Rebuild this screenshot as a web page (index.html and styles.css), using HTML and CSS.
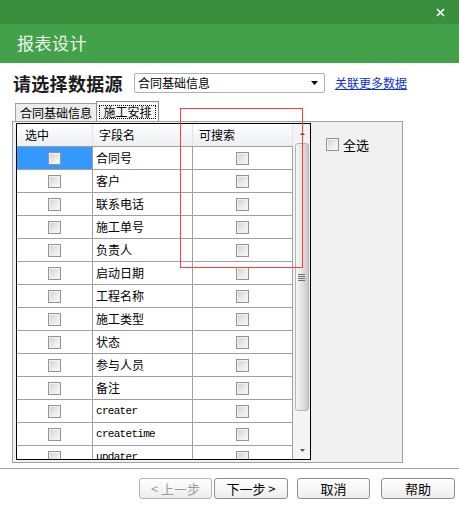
FILE: index.html
```html
<!DOCTYPE html>
<html lang="zh-CN">
<head>
<meta charset="utf-8">
<title>报表设计</title>
<link rel="stylesheet" href="styles.css">
</head>
<body>
<div class="dialog">
  <div class="topbar">
    <svg class="close" width="9" height="9" viewBox="0 0 9 9"><path d="M1 1L8 8M8 1L1 8" stroke="#fff" stroke-width="1.7"/></svg>
  </div>
  <div class="titlebar">报表设计</div>

  <div class="source-row">
    <span class="source-label">请选择数据源</span>
    <div class="select">
      <span>合同基础信息</span>
      <svg class="select-arrow" width="7" height="4" viewBox="0 0 7 4"><path d="M0 0H7L3.5 4Z" fill="#000"/></svg>
    </div>
    <a class="link" href="#">关联更多数据</a>
  </div>

  <div class="tabs">
    <div class="tab">合同基础信息</div>
    <div class="tab tab-active"><span class="focus">施工安排</span></div>
  </div>

  <div class="panel">
    <div class="grid">
      <div class="table">
        <div class="row head"><div class="c1">选中</div><div class="c2">字段名</div><div class="c3">可搜索</div></div>
        <div class="row"><div class="c1 sel"><span class="cb"></span></div><div class="c2">合同号</div><div class="c3"><span class="cb"></span></div></div>
        <div class="row"><div class="c1"><span class="cb"></span></div><div class="c2">客户</div><div class="c3"><span class="cb"></span></div></div>
        <div class="row"><div class="c1"><span class="cb"></span></div><div class="c2">联系电话</div><div class="c3"><span class="cb"></span></div></div>
        <div class="row"><div class="c1"><span class="cb"></span></div><div class="c2">施工单号</div><div class="c3"><span class="cb"></span></div></div>
        <div class="row"><div class="c1"><span class="cb"></span></div><div class="c2">负责人</div><div class="c3"><span class="cb"></span></div></div>
        <div class="row"><div class="c1"><span class="cb"></span></div><div class="c2">启动日期</div><div class="c3"><span class="cb"></span></div></div>
        <div class="row"><div class="c1"><span class="cb"></span></div><div class="c2">工程名称</div><div class="c3"><span class="cb"></span></div></div>
        <div class="row"><div class="c1"><span class="cb"></span></div><div class="c2">施工类型</div><div class="c3"><span class="cb"></span></div></div>
        <div class="row"><div class="c1"><span class="cb"></span></div><div class="c2">状态</div><div class="c3"><span class="cb"></span></div></div>
        <div class="row"><div class="c1"><span class="cb"></span></div><div class="c2">参与人员</div><div class="c3"><span class="cb"></span></div></div>
        <div class="row"><div class="c1"><span class="cb"></span></div><div class="c2">备注</div><div class="c3"><span class="cb"></span></div></div>
        <div class="row"><div class="c1"><span class="cb"></span></div><div class="c2 mono">creater</div><div class="c3"><span class="cb"></span></div></div>
        <div class="row"><div class="c1"><span class="cb"></span></div><div class="c2 mono">createtime</div><div class="c3"><span class="cb"></span></div></div>
        <div class="row"><div class="c1"><span class="cb"></span></div><div class="c2 mono">updater</div><div class="c3"><span class="cb"></span></div></div>
      </div>
      <div class="scrollbar">
        <div class="sb-btn"><svg width="5" height="3" viewBox="0 0 5 3"><path d="M0 3H5L2.5 0Z" fill="#555"/></svg></div>
        <div class="sb-track">
          <div class="sb-thumb"><span class="grip"></span></div>
        </div>
        <div class="sb-btn"><svg width="5" height="3" viewBox="0 0 5 3"><path d="M0 0H5L2.5 3Z" fill="#555"/></svg></div>
      </div>
    </div>
    <div class="side">
      <label class="selectall"><span class="cb"></span><span>全选</span></label>
    </div>
  </div>

  <div class="footer">
    <button class="btn btn-disabled">&lt; 上一步</button>
    <button class="btn btn-next">下一步 &gt;</button>
    <button class="btn btn-cancel">取消</button>
    <button class="btn btn-help">帮助</button>
  </div>

  <div class="redbox"></div>
</div>
</body>
</html>
```

FILE: styles.css
```css
* { box-sizing: border-box; }
html, body { margin: 0; padding: 0; background: #fff; }
body {
  font-family: "Noto Sans CJK SC", "Noto Sans", sans-serif;
  font-size: 12px;
  color: #000;
}
.dialog {
  position: relative;
  width: 459px;
  height: 507px;
  overflow: hidden;
  background: #fff;
}
.topbar {
  height: 24px;
  background: #3a8f3f;
  display: flex;
  justify-content: flex-end;
  align-items: center;
  padding-right: 14px;
}
.close { display: block; }
.titlebar {
  height: 39px;
  background: #43a149;
  color: #eef7ee;
  font-size: 17px;
  line-height: 38px;
  padding-left: 17px;
  letter-spacing: 0.5px;
}
.source-row {
  margin-top: 10px;
  height: 20px;
  padding-left: 13px;
  display: flex;
  align-items: center;
}
.source-label {
  width: 121px;
  font-size: 18px;
  font-weight: bold;
  line-height: 20px;
  color: #1c1c1c;
  letter-spacing: 0.3px;
}
.select {
  width: 191px;
  height: 20px;
  border: 1px solid #aab0b8;
  border-radius: 2px;
  background: #fff;
  padding-left: 3px;
  padding-right: 6px;
  display: flex;
  align-items: center;
  justify-content: space-between;
  font-size: 12px;
  line-height: 18px;
}
.select-arrow { display: block; }
.link {
  margin-left: 10px;
  font-size: 12px;
  line-height: 16px;
  color: #0a2fe0;
  text-decoration: underline;
}
.tabs {
  margin-top: 8px;
  height: 20px;
  padding-left: 15px;
  display: flex;
  align-items: flex-end;
}
.tab {
  height: 18px;
  width: 82px;
  border: 1px solid #a0a0a0;
  border-bottom: none;
  background: #ececec;
  font-size: 12px;
  line-height: 17px;
  text-align: center;
}
.tab-active {
  height: 20px;
  width: 63px;
  margin-left: -1px;
  background: #f9f9f9;
  border-color: #8c8c8c;
  padding: 3px 2px 2px 2px;
  display: flex;
}
.focus {
  flex: 1;
  border: 1px dotted #000;
  line-height: 12px;
  font-size: 12px;
  text-align: center;
}
.panel {
  margin-left: 12px;
  width: 391px;
  height: 342px;
  border: 1px solid #a0a0a0;
  background: #f0f0f0;
  padding: 1px 0 0 3px;
  display: flex;
  align-items: flex-start;
}
.grid {
  width: 295px;
  height: 337px;
  border: 1px solid #000;
  background: #fff;
  display: flex;
  overflow: hidden;
}
.table {
  width: 276px;
  height: 335px;
  overflow: hidden;
}
.row {
  display: flex;
  height: 23px;
  border-bottom: 1px solid #a0a0a0;
}
.row > div {
  height: 22px;
  border-right: 1px solid #a0a0a0;
  display: flex;
  align-items: center;
  line-height: 22px;
}
.c1 { width: 76px; justify-content: center; }
.c2 { width: 100px; padding-left: 3px; font-size: 12px; }
.c3 { width: 100px; justify-content: center; }
.mono {
  font-family: "Liberation Mono", "DejaVu Sans Mono", monospace;
  font-size: 11px;
  letter-spacing: -0.7px;
}
.sel { background: #3399ff; }
.head {
  background: linear-gradient(#ffffff, #f4f5f7 60%, #eceef1);
  border-bottom-color: #a0a0a0;
}
.head > div {
  border-right: 1px solid #e0e2e6;
  justify-content: flex-start;
  font-size: 12px;
}
.head .c1 { padding-left: 8px; }
.head .c2 { padding-left: 6px; }
.head .c3 { padding-left: 6px; }
.cb {
  display: inline-block;
  width: 13px;
  height: 13px;
  border: 1px solid #939393;
  background: linear-gradient(135deg, #cfcfcf 0%, #e6e6e6 45%, #fbfbfb 100%);
  box-shadow: inset 0 0 0 1px #f2f2f2;
  flex: none;
}
.scrollbar {
  width: 17px;
  height: 335px;
  background: #f4f4f4;
  display: flex;
  flex-direction: column;
}
.sb-btn {
  height: 18px;
  display: flex;
  align-items: center;
  justify-content: center;
  padding-left: 1px;
}
.sb-btn svg { display: block; }
.sb-track {
  flex: 1;
  padding-top: 1px;
}
.sb-thumb {
  margin-left: 2px;
  width: 14px;
  height: 268px;
  border: 1px solid #b4b4b4;
  border-radius: 3px;
  background: linear-gradient(to right, #f6f6f6, #e4e4e4 50%, #c9c9c9);
  display: flex;
  align-items: center;
  justify-content: center;
}
.grip {
  display: block;
  width: 7px;
  height: 7px;
  margin-right: 1px;
  background: repeating-linear-gradient(#707070 0 1px, transparent 1px 2px);
}
.side {
  padding: 15px 0 0 15px;
}
.selectall {
  display: flex;
  align-items: center;
  gap: 4px;
  font-size: 13px;
  line-height: 13px;
}
.footer {
  margin-top: 5px;
  border-top: 1px solid #a0a0a0;
  padding: 9px 0 0 139px;
  display: flex;
}
.btn {
  height: 21px;
  width: 73px;
  padding: 0;
  border: 1px solid #8e8e8e;
  border-radius: 3px;
  background: linear-gradient(#ffffff, #f7f7f7 50%, #ececec);
  font-family: "Noto Sans CJK SC", "Noto Sans", sans-serif;
  font-size: 13px;
  line-height: 19px;
  color: #000;
  text-align: center;
}
.btn-disabled {
  color: #9a9a9a;
  border-color: #b4b4b4;
}
.btn-next { margin-left: 2px; width: 74px; }
.btn-cancel { margin-left: 9px; }
.btn-help { margin-left: 11px; width: 74px; }
.redbox {
  position: absolute;
  left: 180px;
  top: 108px;
  width: 123px;
  height: 160px;
  border: 1px solid #ff3b3b;
  pointer-events: none;
}
```
